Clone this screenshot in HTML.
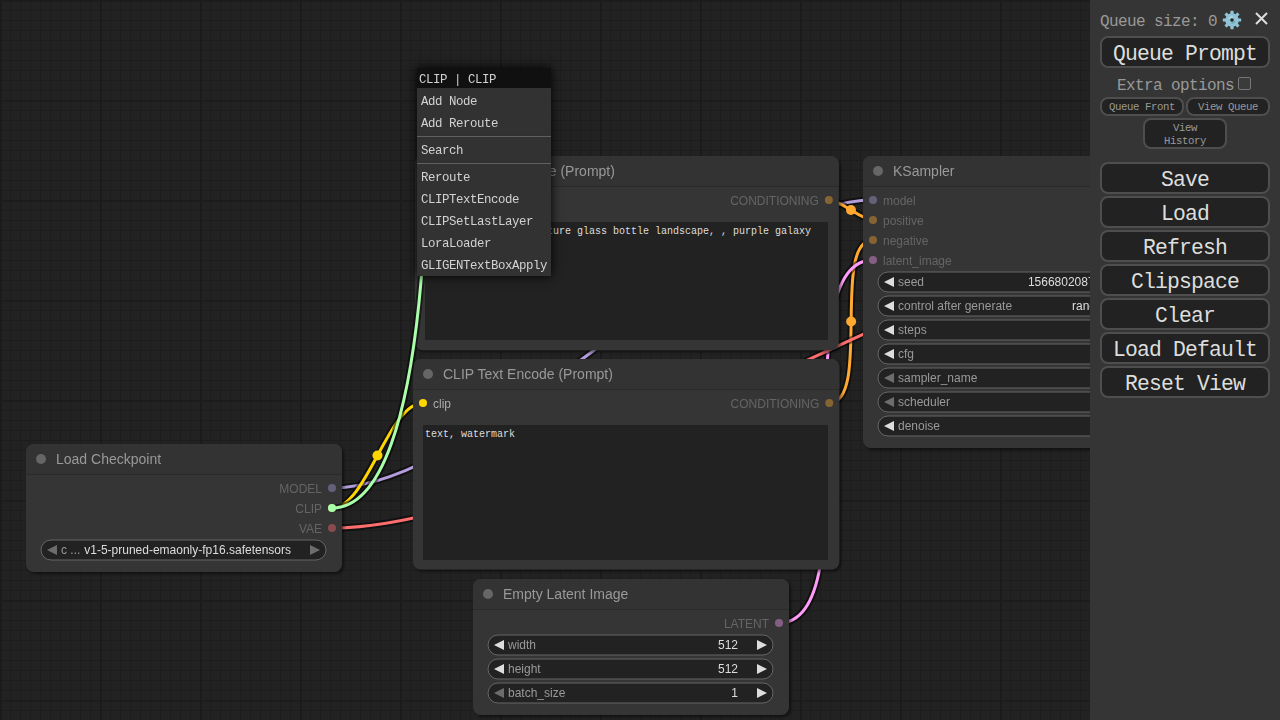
<!DOCTYPE html><html><head><meta charset="utf-8"><style>
*{box-sizing:border-box}
html,body{margin:0;padding:0;width:1280px;height:720px;overflow:hidden;background:#222}
.ta{position:absolute;background:#222;color:#ddd;font-family:"Liberation Mono",monospace;font-size:10px;padding:2px;line-height:16px;overflow:hidden;white-space:pre-wrap;word-wrap:break-word}
.cm{position:absolute;left:417px;top:68px;width:134px;background:#353535;box-shadow:0 0 10px #000;filter:brightness(95%);font-family:"Liberation Mono",monospace;font-size:12.4px;letter-spacing:-0.44px;color:#ddd;padding-bottom:2px}
.cm .t{background:#111;height:20px;padding:2px 2px 0 2px;line-height:20px;color:#ddd}
.cm .e{height:22px;line-height:22px;padding:3px 4px 0 4px;white-space:nowrap}
.cm .sep{border-top:1px solid #333;border-bottom:1px solid #666;margin:3px 0 0 0;height:0}
.menu{position:absolute;left:1090px;top:0;width:190px;height:720px;background:#353535;font-family:"Liberation Mono",monospace;color:#999;font-size:16px;letter-spacing:-0.6px}
.btn{position:absolute;left:10px;width:170px;height:32px;background:#222;border:2px solid #4e4e4e;border-radius:8px;color:#ddd;font-size:21.4px;letter-spacing:-0.84px;text-align:center;line-height:32px;font-family:"Liberation Mono",monospace}
.sbtn{position:absolute;background:#222;border:2px solid #4e4e4e;border-radius:8px;color:#999;font-size:10.7px;letter-spacing:-0.42px;text-align:center;font-family:"Liberation Mono",monospace}
</style></head><body>
<svg width="1280" height="720" style="position:absolute;left:0;top:0;will-change:transform"><defs>
<pattern id="grid" x="0" y="0" width="100" height="100" patternUnits="userSpaceOnUse">
<g shape-rendering="crispEdges">
<rect width="100" height="100" fill="#222"/>
<rect x="10" y="0" width="1" height="100" fill="#1d1d1d"/><rect x="0" y="10" width="100" height="1" fill="#1d1d1d"/><rect x="20" y="0" width="1" height="100" fill="#1d1d1d"/><rect x="0" y="20" width="100" height="1" fill="#1d1d1d"/><rect x="30" y="0" width="1" height="100" fill="#1d1d1d"/><rect x="0" y="30" width="100" height="1" fill="#1d1d1d"/><rect x="40" y="0" width="1" height="100" fill="#1d1d1d"/><rect x="0" y="40" width="100" height="1" fill="#1d1d1d"/><rect x="50" y="0" width="1" height="100" fill="#1d1d1d"/><rect x="0" y="50" width="100" height="1" fill="#1d1d1d"/><rect x="60" y="0" width="1" height="100" fill="#1d1d1d"/><rect x="0" y="60" width="100" height="1" fill="#1d1d1d"/><rect x="70" y="0" width="1" height="100" fill="#1d1d1d"/><rect x="0" y="70" width="100" height="1" fill="#1d1d1d"/><rect x="80" y="0" width="1" height="100" fill="#1d1d1d"/><rect x="0" y="80" width="100" height="1" fill="#1d1d1d"/><rect x="90" y="0" width="1" height="100" fill="#1d1d1d"/><rect x="0" y="90" width="100" height="1" fill="#1d1d1d"/>
<rect x="0" y="1" width="100" height="1" fill="#1e1e1e"/>
<rect x="1" y="0" width="1" height="100" fill="#1c1c1c"/>
<rect x="0" y="0" width="100" height="1" fill="#1b1b1b"/>
<rect x="0" y="0" width="1" height="100" fill="#1b1b1b"/>
</g>
</pattern>
<filter id="sh" x="-10%" y="-10%" width="120%" height="120%">
<feDropShadow dx="2" dy="2" stdDeviation="1.5" flood-color="#000" flood-opacity="0.5"/>
</filter>
</defs>
<rect width="1280" height="720" fill="url(#grid)"/>
<path d="M332,488.0 C485.2206334016408,488.0 719.7793665983593,200.0 873,200.0" fill="none" stroke="rgba(0,0,0,0.5)" stroke-width="7" stroke-linejoin="round"/><path d="M332,488.0 C485.2206334016408,488.0 719.7793665983593,200.0 873,200.0" fill="none" stroke="#B39DDB" stroke-width="3" stroke-linejoin="round"/><circle cx="602.50" cy="344.00" r="5" fill="#B39DDB"/><path d="M332,508.0 C366.7365081722386,508.0 388.2634918277614,403.0 423,403.0" fill="none" stroke="rgba(0,0,0,0.5)" stroke-width="7" stroke-linejoin="round"/><path d="M332,508.0 C366.7365081722386,508.0 388.2634918277614,403.0 423,403.0" fill="none" stroke="#FFD500" stroke-width="3" stroke-linejoin="round"/><circle cx="377.50" cy="455.50" r="5" fill="#FFD500"/><path d="M828.845,200.0 C840.9633332831912,200.0 860.8816667168088,220.0 873,220.0" fill="none" stroke="rgba(0,0,0,0.5)" stroke-width="7" stroke-linejoin="round"/><path d="M828.845,200.0 C840.9633332831912,200.0 860.8816667168088,220.0 873,220.0" fill="none" stroke="#FFA931" stroke-width="3" stroke-linejoin="round"/><circle cx="850.92" cy="210.00" r="5" fill="#FFA931"/><path d="M829.278,403.0 C871.4685004740404,403.0 830.8094995259596,240.0 873,240.0" fill="none" stroke="rgba(0,0,0,0.5)" stroke-width="7" stroke-linejoin="round"/><path d="M829.278,403.0 C871.4685004740404,403.0 830.8094995259596,240.0 873,240.0" fill="none" stroke="#FFA931" stroke-width="3" stroke-linejoin="round"/><circle cx="851.14" cy="321.50" r="5" fill="#FFA931"/><path d="M779,623.0 C872.7433330962795,623.0 779.2566669037205,260.0 873,260.0" fill="none" stroke="rgba(0,0,0,0.5)" stroke-width="7" stroke-linejoin="round"/><path d="M779,623.0 C872.7433330962795,623.0 779.2566669037205,260.0 873,260.0" fill="none" stroke="#FF9CF9" stroke-width="3" stroke-linejoin="round"/><circle cx="826.00" cy="441.50" r="5" fill="#FF9CF9"/><path d="M1169,200.0 C1181.5099960031969,200.0 1206.4900039968031,202.0 1219,202.0" fill="none" stroke="rgba(0,0,0,0.5)" stroke-width="7" stroke-linejoin="round"/><path d="M1169,200.0 C1181.5099960031969,200.0 1206.4900039968031,202.0 1219,202.0" fill="none" stroke="#FF9CF9" stroke-width="3" stroke-linejoin="round"/><circle cx="1194.00" cy="201.00" r="5" fill="#FF9CF9"/><path d="M332,528.0 C566.5747482147215,528.0 984.4252517852785,222.0 1219,222.0" fill="none" stroke="rgba(0,0,0,0.5)" stroke-width="7" stroke-linejoin="round"/><path d="M332,528.0 C566.5747482147215,528.0 984.4252517852785,222.0 1219,222.0" fill="none" stroke="#FF6E6E" stroke-width="3" stroke-linejoin="round"/><circle cx="775.50" cy="375.00" r="5" fill="#FF6E6E"/><path d="M421,359 L831.278,359 A8,8 0 0 1 839.278,367 L839.278,561.606 A8,8 0 0 1 831.278,569.606 L421,569.606 A8,8 0 0 1 413,561.606 L413,367 A8,8 0 0 1 421,359 Z" fill="#353535" filter="url(#sh)"/><rect x="413" y="388" width="426.278" height="2" fill="rgba(0,0,0,0.2)"/><path d="M421,359 L831.278,359 A8,8 0 0 1 839.278,367 L839.278,389 L413,389 L413,367 A8,8 0 0 1 421,359 Z" fill="#333"/><circle cx="428" cy="374" r="5" fill="#666"/><text x="443" y="379" font-family="Liberation Sans" font-size="14" fill="#999" text-anchor="start">CLIP Text Encode (Prompt)</text><g opacity="1"><circle cx="423" cy="403.0" r="4" fill="#FFD500"/><text x="433" y="408.0" font-family="Liberation Sans" font-size="12" fill="#AAA" text-anchor="start">clip</text></g><g opacity="0.4"><circle cx="829.278" cy="403.0" r="4" fill="#FFA931"/><text x="819.278" y="408.0" font-family="Liberation Sans" font-size="12" fill="#AAA" text-anchor="end">CONDITIONING</text></g><path d="M423,156 L830.845,156 A8,8 0 0 1 838.845,164 L838.845,342.313 A8,8 0 0 1 830.845,350.313 L423,350.313 A8,8 0 0 1 415,342.313 L415,164 A8,8 0 0 1 423,156 Z" fill="#353535" filter="url(#sh)"/><rect x="415" y="185" width="423.845" height="2" fill="rgba(0,0,0,0.2)"/><path d="M423,156 L830.845,156 A8,8 0 0 1 838.845,164 L838.845,186 L415,186 L415,164 A8,8 0 0 1 423,156 Z" fill="#333"/><circle cx="430" cy="171" r="5" fill="#666"/><text x="445" y="176" font-family="Liberation Sans" font-size="14" fill="#999" text-anchor="start">CLIP Text Encode (Prompt)</text><g opacity="1"><circle cx="425" cy="200.0" r="4" fill="#FFD500"/><text x="435" y="205.0" font-family="Liberation Sans" font-size="12" fill="#AAA" text-anchor="start">clip</text></g><g opacity="0.4"><circle cx="828.845" cy="200.0" r="4" fill="#FFA931"/><text x="818.845" y="205.0" font-family="Liberation Sans" font-size="12" fill="#AAA" text-anchor="end">CONDITIONING</text></g><path d="M481,579 L781,579 A8,8 0 0 1 789,587 L789,707 A8,8 0 0 1 781,715 L481,715 A8,8 0 0 1 473,707 L473,587 A8,8 0 0 1 481,579 Z" fill="#353535" filter="url(#sh)"/><rect x="473" y="608" width="316" height="2" fill="rgba(0,0,0,0.2)"/><path d="M481,579 L781,579 A8,8 0 0 1 789,587 L789,609 L473,609 L473,587 A8,8 0 0 1 481,579 Z" fill="#333"/><circle cx="488" cy="594" r="5" fill="#666"/><text x="503" y="599" font-family="Liberation Sans" font-size="14" fill="#999" text-anchor="start">Empty Latent Image</text><g opacity="0.4"><circle cx="779" cy="623.0" r="4" fill="#FF9CF9"/><text x="769" y="628.0" font-family="Liberation Sans" font-size="12" fill="#AAA" text-anchor="end">LATENT</text></g><rect x="488" y="635.0" width="285" height="20" rx="10" ry="10" fill="#222" stroke="#666" stroke-width="1"/><path d="M504,640.0 L494,645.0 L504,650.0 Z" fill="#DDD"/><path d="M757,640.0 L767,645.0 L757,650.0 Z" fill="#DDD"/><text x="508" y="649.0" font-family="Liberation Sans" font-size="12" fill="#999" text-anchor="start">width</text><text x="738" y="649.0" font-family="Liberation Sans" font-size="12" fill="#DDD" text-anchor="end">512</text><rect x="488" y="659.0" width="285" height="20" rx="10" ry="10" fill="#222" stroke="#666" stroke-width="1"/><path d="M504,664.0 L494,669.0 L504,674.0 Z" fill="#DDD"/><path d="M757,664.0 L767,669.0 L757,674.0 Z" fill="#DDD"/><text x="508" y="673.0" font-family="Liberation Sans" font-size="12" fill="#999" text-anchor="start">height</text><text x="738" y="673.0" font-family="Liberation Sans" font-size="12" fill="#DDD" text-anchor="end">512</text><rect x="488" y="683.0" width="285" height="20" rx="10" ry="10" fill="#222" stroke="#666" stroke-width="1"/><path d="M504,688.0 L494,693.0 L504,698.0 Z" fill="#6d6d6d"/><path d="M757,688.0 L767,693.0 L757,698.0 Z" fill="#DDD"/><text x="508" y="697.0" font-family="Liberation Sans" font-size="12" fill="#999" text-anchor="start">batch_size</text><text x="738" y="697.0" font-family="Liberation Sans" font-size="12" fill="#DDD" text-anchor="end">1</text><path d="M871,156 L1171,156 A8,8 0 0 1 1179,164 L1179,440 A8,8 0 0 1 1171,448 L871,448 A8,8 0 0 1 863,440 L863,164 A8,8 0 0 1 871,156 Z" fill="#353535" filter="url(#sh)"/><rect x="863" y="185" width="316" height="2" fill="rgba(0,0,0,0.2)"/><path d="M871,156 L1171,156 A8,8 0 0 1 1179,164 L1179,186 L863,186 L863,164 A8,8 0 0 1 871,156 Z" fill="#333"/><circle cx="878" cy="171" r="5" fill="#666"/><text x="893" y="176" font-family="Liberation Sans" font-size="14" fill="#999" text-anchor="start">KSampler</text><g opacity="0.4"><circle cx="873" cy="200.0" r="4" fill="#B39DDB"/><text x="883" y="205.0" font-family="Liberation Sans" font-size="12" fill="#AAA" text-anchor="start">model</text></g><g opacity="0.4"><circle cx="873" cy="220.0" r="4" fill="#FFA931"/><text x="883" y="225.0" font-family="Liberation Sans" font-size="12" fill="#AAA" text-anchor="start">positive</text></g><g opacity="0.4"><circle cx="873" cy="240.0" r="4" fill="#FFA931"/><text x="883" y="245.0" font-family="Liberation Sans" font-size="12" fill="#AAA" text-anchor="start">negative</text></g><g opacity="0.4"><circle cx="873" cy="260.0" r="4" fill="#FF9CF9"/><text x="883" y="265.0" font-family="Liberation Sans" font-size="12" fill="#AAA" text-anchor="start">latent_image</text></g><g opacity="0.4"><circle cx="1169" cy="200.0" r="4" fill="#FF9CF9"/><text x="1159" y="205.0" font-family="Liberation Sans" font-size="12" fill="#AAA" text-anchor="end">LATENT</text></g><rect x="878" y="272.0" width="285" height="20" rx="10" ry="10" fill="#222" stroke="#666" stroke-width="1"/><path d="M894,277.0 L884,282.0 L894,287.0 Z" fill="#DDD"/><path d="M1147,277.0 L1157,282.0 L1147,287.0 Z" fill="#DDD"/><text x="898" y="286.0" font-family="Liberation Sans" font-size="12" fill="#999" text-anchor="start">seed</text><text x="1128" y="286.0" font-family="Liberation Sans" font-size="12" fill="#DDD" text-anchor="end">156680208700286</text><rect x="878" y="296.0" width="285" height="20" rx="10" ry="10" fill="#222" stroke="#666" stroke-width="1"/><path d="M894,301.0 L884,306.0 L894,311.0 Z" fill="#DDD"/><path d="M1147,301.0 L1157,306.0 L1147,311.0 Z" fill="#DDD"/><text x="898" y="310.0" font-family="Liberation Sans" font-size="12" fill="#999" text-anchor="start">control after generate</text><text x="1128" y="310.0" font-family="Liberation Sans" font-size="12" fill="#DDD" text-anchor="end">randomize</text><rect x="878" y="320.0" width="285" height="20" rx="10" ry="10" fill="#222" stroke="#666" stroke-width="1"/><path d="M894,325.0 L884,330.0 L894,335.0 Z" fill="#DDD"/><path d="M1147,325.0 L1157,330.0 L1147,335.0 Z" fill="#DDD"/><text x="898" y="334.0" font-family="Liberation Sans" font-size="12" fill="#999" text-anchor="start">steps</text><text x="1128" y="334.0" font-family="Liberation Sans" font-size="12" fill="#DDD" text-anchor="end">20</text><rect x="878" y="344.0" width="285" height="20" rx="10" ry="10" fill="#222" stroke="#666" stroke-width="1"/><path d="M894,349.0 L884,354.0 L894,359.0 Z" fill="#DDD"/><path d="M1147,349.0 L1157,354.0 L1147,359.0 Z" fill="#DDD"/><text x="898" y="358.0" font-family="Liberation Sans" font-size="12" fill="#999" text-anchor="start">cfg</text><text x="1128" y="358.0" font-family="Liberation Sans" font-size="12" fill="#DDD" text-anchor="end">8.0</text><rect x="878" y="368.0" width="285" height="20" rx="10" ry="10" fill="#222" stroke="#666" stroke-width="1"/><path d="M894,373.0 L884,378.0 L894,383.0 Z" fill="#6d6d6d"/><path d="M1147,373.0 L1157,378.0 L1147,383.0 Z" fill="#DDD"/><text x="898" y="382.0" font-family="Liberation Sans" font-size="12" fill="#999" text-anchor="start">sampler_name</text><text x="1128" y="382.0" font-family="Liberation Sans" font-size="12" fill="#DDD" text-anchor="end">euler</text><rect x="878" y="392.0" width="285" height="20" rx="10" ry="10" fill="#222" stroke="#666" stroke-width="1"/><path d="M894,397.0 L884,402.0 L894,407.0 Z" fill="#6d6d6d"/><path d="M1147,397.0 L1157,402.0 L1147,407.0 Z" fill="#DDD"/><text x="898" y="406.0" font-family="Liberation Sans" font-size="12" fill="#999" text-anchor="start">scheduler</text><text x="1128" y="406.0" font-family="Liberation Sans" font-size="12" fill="#DDD" text-anchor="end">normal</text><rect x="878" y="416.0" width="285" height="20" rx="10" ry="10" fill="#222" stroke="#666" stroke-width="1"/><path d="M894,421.0 L884,426.0 L894,431.0 Z" fill="#DDD"/><path d="M1147,421.0 L1157,426.0 L1147,431.0 Z" fill="#DDD"/><text x="898" y="430.0" font-family="Liberation Sans" font-size="12" fill="#999" text-anchor="start">denoise</text><text x="1128" y="430.0" font-family="Liberation Sans" font-size="12" fill="#DDD" text-anchor="end">1.00</text><path d="M34,444 L334,444 A8,8 0 0 1 342,452 L342,564 A8,8 0 0 1 334,572 L34,572 A8,8 0 0 1 26,564 L26,452 A8,8 0 0 1 34,444 Z" fill="#353535" filter="url(#sh)"/><rect x="26" y="473" width="316" height="2" fill="rgba(0,0,0,0.2)"/><path d="M34,444 L334,444 A8,8 0 0 1 342,452 L342,474 L26,474 L26,452 A8,8 0 0 1 34,444 Z" fill="#333"/><circle cx="41" cy="459" r="5" fill="#666"/><text x="56" y="464" font-family="Liberation Sans" font-size="14" fill="#999" text-anchor="start">Load Checkpoint</text><g opacity="0.4"><circle cx="332" cy="488.0" r="4" fill="#B39DDB"/><text x="322" y="493.0" font-family="Liberation Sans" font-size="12" fill="#AAA" text-anchor="end">MODEL</text></g><g opacity="0.4"><circle cx="332" cy="508.0" r="4" fill="#FFD500"/><text x="322" y="513.0" font-family="Liberation Sans" font-size="12" fill="#AAA" text-anchor="end">CLIP</text></g><g opacity="0.4"><circle cx="332" cy="528.0" r="4" fill="#FF6E6E"/><text x="322" y="533.0" font-family="Liberation Sans" font-size="12" fill="#AAA" text-anchor="end">VAE</text></g><rect x="41" y="540.0" width="285" height="20" rx="10" ry="10" fill="#222" stroke="#666" stroke-width="1"/><path d="M57,545.0 L47,550.0 L57,555.0 Z" fill="#6d6d6d"/><path d="M310,545.0 L320,550.0 L310,555.0 Z" fill="#6d6d6d"/><text x="61" y="554.0" font-family="Liberation Sans" font-size="12" fill="#999" text-anchor="start">c ...</text><text x="291" y="554.0" font-family="Liberation Sans" font-size="12" fill="#DDD" text-anchor="end">v1-5-pruned-emaonly-fp16.safetensors</text><path d="M332,508.0 C437.21555255759483,508.0 427,98 427,98" fill="none" stroke="rgba(0,0,0,0.5)" stroke-width="7" stroke-linejoin="round"/><path d="M332,508.0 C437.21555255759483,508.0 427,98 427,98" fill="none" stroke="#AFA" stroke-width="3" stroke-linejoin="round"/><circle cx="332" cy="508.0" r="4" fill="#AFA"/><circle cx="427" cy="98" r="4" fill="#AFA"/></svg>
<div class="ta" style="left:425px;top:222px;width:402.845px;height:118.31299999999999px">beautiful scenery nature glass bottle landscape, , purple galaxy bottle,</div>
<div class="ta" style="left:423px;top:425px;width:405.278px;height:134.606px">text, watermark</div>
<div class="cm"><div class="t">CLIP | CLIP</div><div class="e">Add Node</div><div class="e">Add Reroute</div><div class="sep"></div><div class="e">Search</div><div class="sep"></div><div class="e">Reroute</div><div class="e">CLIPTextEncode</div><div class="e">CLIPSetLastLayer</div><div class="e">LoraLoader</div><div class="e">GLIGENTextBoxApply</div></div>
<div class="menu"><div style="position:absolute;left:10px;top:13px;height:18px;line-height:18px;">Queue size: 0</div><svg width="24" height="24" viewBox="-12 -12 24 24" style="position:absolute;left:130px;top:7.9px"><rect x="-1.6" y="-9.2" width="3.2" height="4.6" rx="0.3" fill="#90c3d3" transform="rotate(0)"/><rect x="-1.6" y="-9.2" width="3.2" height="4.6" rx="0.3" fill="#90c3d3" transform="rotate(45)"/><rect x="-1.6" y="-9.2" width="3.2" height="4.6" rx="0.3" fill="#90c3d3" transform="rotate(90)"/><rect x="-1.6" y="-9.2" width="3.2" height="4.6" rx="0.3" fill="#90c3d3" transform="rotate(135)"/><rect x="-1.6" y="-9.2" width="3.2" height="4.6" rx="0.3" fill="#90c3d3" transform="rotate(180)"/><rect x="-1.6" y="-9.2" width="3.2" height="4.6" rx="0.3" fill="#90c3d3" transform="rotate(225)"/><rect x="-1.6" y="-9.2" width="3.2" height="4.6" rx="0.3" fill="#90c3d3" transform="rotate(270)"/><rect x="-1.6" y="-9.2" width="3.2" height="4.6" rx="0.3" fill="#90c3d3" transform="rotate(315)"/><circle r="6.8" fill="#90c3d3"/><path d="M-2.9,-1.2 A3.1,3.1 0 0 1 0.8,-3" stroke="#c9e7ef" stroke-width="1" fill="none"/><path d="M3,1 A3.1,3.1 0 0 1 -0.6,3.05" stroke="#4f9bb0" stroke-width="1" fill="none"/><circle r="1.8" fill="#262626"/></svg><svg width="14" height="14" viewBox="0 0 14 14" style="position:absolute;left:165px;top:12.3px"><path d="M1,1 L12,12 M12,1 L1,12" stroke="#ddd" stroke-width="2"/></svg><div class="btn" style="top:36px">Queue Prompt</div><div style="position:absolute;left:27px;top:77px;height:18px;line-height:18px">Extra options</div><div style="position:absolute;left:148px;top:77px;width:13px;height:13px;border:1px solid #767676;border-radius:2px;background:#3b3b3b"></div><div class="sbtn" style="left:10px;top:97px;width:84px;height:19px;line-height:16px">Queue Front</div><div class="sbtn" style="left:96px;top:97px;width:84px;height:19px;line-height:16px">View Queue</div><div class="sbtn" style="left:53px;top:118px;width:84px;height:31px;line-height:13px;padding-top:2px">View<br>History</div><div class="btn" style="top:162px">Save</div><div class="btn" style="top:196px">Load</div><div class="btn" style="top:230px">Refresh</div><div class="btn" style="top:264px">Clipspace</div><div class="btn" style="top:298px">Clear</div><div class="btn" style="top:332px">Load Default</div><div class="btn" style="top:366px">Reset View</div></div>
</body></html>
